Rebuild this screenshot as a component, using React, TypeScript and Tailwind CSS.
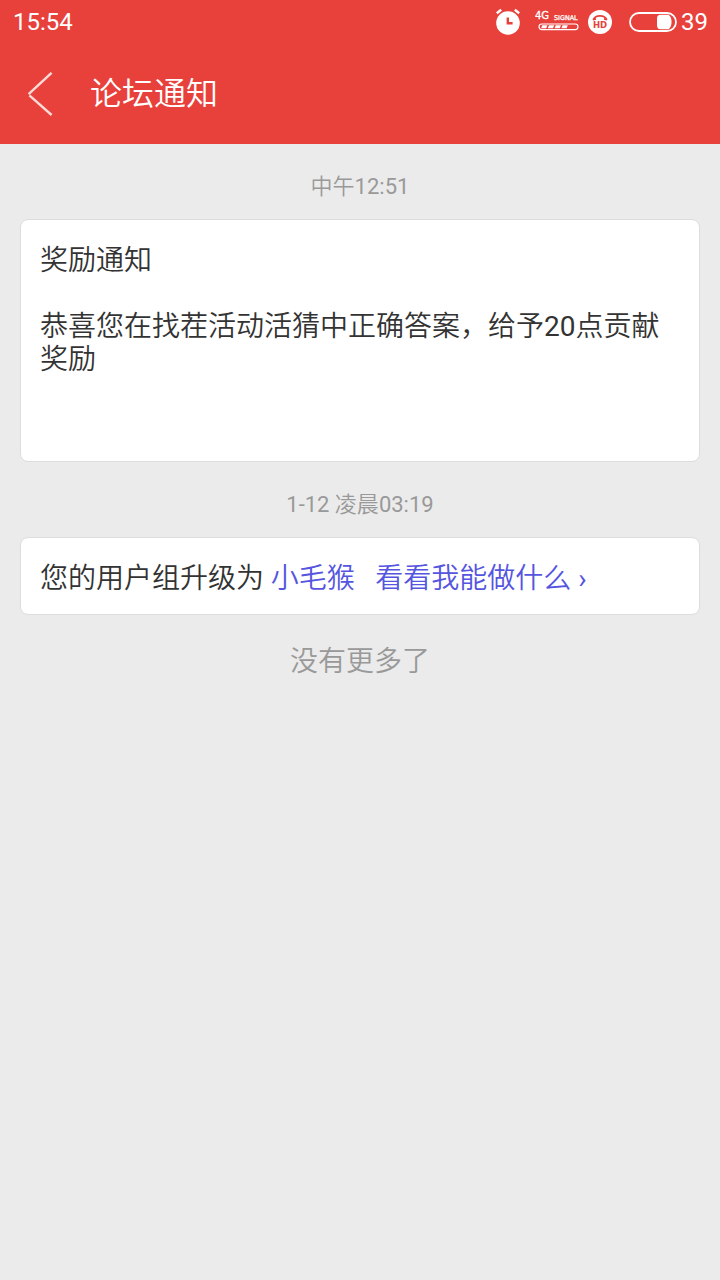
import React from 'react';

const AlarmIcon = () => (
  <svg width="26" height="28" viewBox="0 0 26 28" fill="none" aria-hidden="true">
    <circle cx="13" cy="15" r="11.8" fill="white" />
    <path d="M1.8 5.2L6.2 1.8M24.2 5.2L19.8 1.8" stroke="white" strokeWidth="2.4" />
    <path d="M12.8 9.6V15.2H17.6" stroke="#e8413b" strokeWidth="2.4" />
  </svg>
);

const SignalIcon = () => (
  <svg width="44" height="32" viewBox="0 0 44 32" fill="white" className="font-['DejaVu_Sans',sans-serif]" aria-hidden="true">
    <g stroke="white" strokeWidth="0.3">
      <text x="0" y="13" fontSize="10">4G</text>
      <text x="19" y="14" fontSize="6.4">SIGNAL</text>
    </g>
    <rect x="4" y="18" width="39" height="5.6" rx="2.8" fill="none" stroke="white" strokeWidth="1.2" />
    <path d="M7.2 19.3h5.2l-1.2 3H6.2zM14 19.3h5.2l-1.2 3h-5.2zM20.8 19.3H26l-1.2 3h-5.2zM27.6 19.3h5.2l-1.2 3h-5.2z" />
  </svg>
);

const HdIcon = () => (
  <svg width="24" height="24" viewBox="0 0 24 24" className="font-['DejaVu_Sans',sans-serif]" aria-hidden="true">
    <circle cx="12" cy="12" r="12" fill="white" />
    <path d="M5.6 9.8C7 4.6 17 4.6 18.4 9.8" fill="none" stroke="#e8413b" strokeWidth="1.8" />
    <path d="M4.6 8.8l3.2-.8.4 1.8-3.2.8zM19.4 8.8l-3.2-.8-.4 1.8 3.2.8z" fill="#e8413b" />
    <text x="12" y="18" fontSize="8.5" fontWeight="700" textAnchor="middle" fill="#e8413b">HD</text>
  </svg>
);

const BatteryIcon = () => (
  <svg width="48" height="20" viewBox="0 0 48 20" fill="none" aria-hidden="true">
    <rect x="1" y="1" width="46" height="18" rx="9" stroke="white" strokeWidth="1.8" />
    <path d="M31.5 2.8H39.5C43.6 5 43.6 15 39.5 17.2H31.5Q28 17.2 28 13.6V6.4Q28 2.8 31.5 2.8Z" fill="white" />
  </svg>
);

const StatusBar = () => (
  <div className="flex h-11 items-center justify-between pr-3 pl-[13px] text-2xl font-normal">
    <span>15:54</span>
    <div className="flex items-center">
      <AlarmIcon />
      <div className="ml-[14px] mr-[9px]">
        <SignalIcon />
      </div>
      <HdIcon />
      <div className="ml-[17px] mr-1">
        <BatteryIcon />
      </div>
      <span>39</span>
    </div>
  </div>
);

const Header = () => (
  <header className="bg-[#e8413b] text-white">
    <StatusBar />
    <div className="flex h-[100px] items-center">
      <button type="button" aria-label="返回" className="flex h-full w-[90px] items-center pl-[27px]">
        <svg width="26" height="44" viewBox="0 0 26 44" fill="none" stroke="#fbd9d6" strokeWidth="2.4" aria-hidden="true">
          <path d="M24.6 0.8L1.6 22.2M2.4 23.4L24.6 43" />
        </svg>
      </button>
      <h1 className="text-[32px] leading-10">论坛通知</h1>
    </div>
  </header>
);

// Latin digits sit at regular weight beside the lighter Chinese text
const Num = ({ children }: { children: React.ReactNode }) => <span className="font-normal">{children}</span>;

const TimeLabel = ({ children }: { children: React.ReactNode }) => (
  <p className="pt-7 pb-[17px] text-center text-[22px] leading-[30px] text-[#999999]">{children}</p>
);

const Card = ({ children }: { children: React.ReactNode }) => (
  <div className="rounded-lg border border-[#dddddd] bg-white px-[19px] pt-6 pb-[19px] text-[28px] leading-[33px]">
    {children}
  </div>
);

export default function App() {
  return (
    <div
      className="min-h-screen bg-[#ebebeb] font-['Roboto','Noto_Sans_CJK_SC',sans-serif] font-[350] text-[#333333]"
      lang="zh-CN"
    >
      <Header />
      <main className="px-5">
        <TimeLabel>
          中午<Num>12:51</Num>
        </TimeLabel>
        <Card>
          <h2>奖励通知</h2>
          <br />
          <p>
            恭喜您在找茬活动活猜中正确答案，给予<Num>20</Num>点贡献奖励
          </p>
          <br />
          <br />
        </Card>

        <TimeLabel>
          <Num>1-12</Num> 凌晨<Num>03:19</Num>
        </TimeLabel>
        <Card>
          <p>
            您的用户组升级为 <a href="#group" className="text-[#5555e0]">小毛猴</a>
            &nbsp;&nbsp; <a href="#rights" className="text-[#5555e0]">看看我能做什么 <Num>›</Num></a>
          </p>
        </Card>

        <p className="pt-[30px] text-center text-[28px] leading-[33px] text-[#999999]">没有更多了</p>
      </main>
    </div>
  );
}
